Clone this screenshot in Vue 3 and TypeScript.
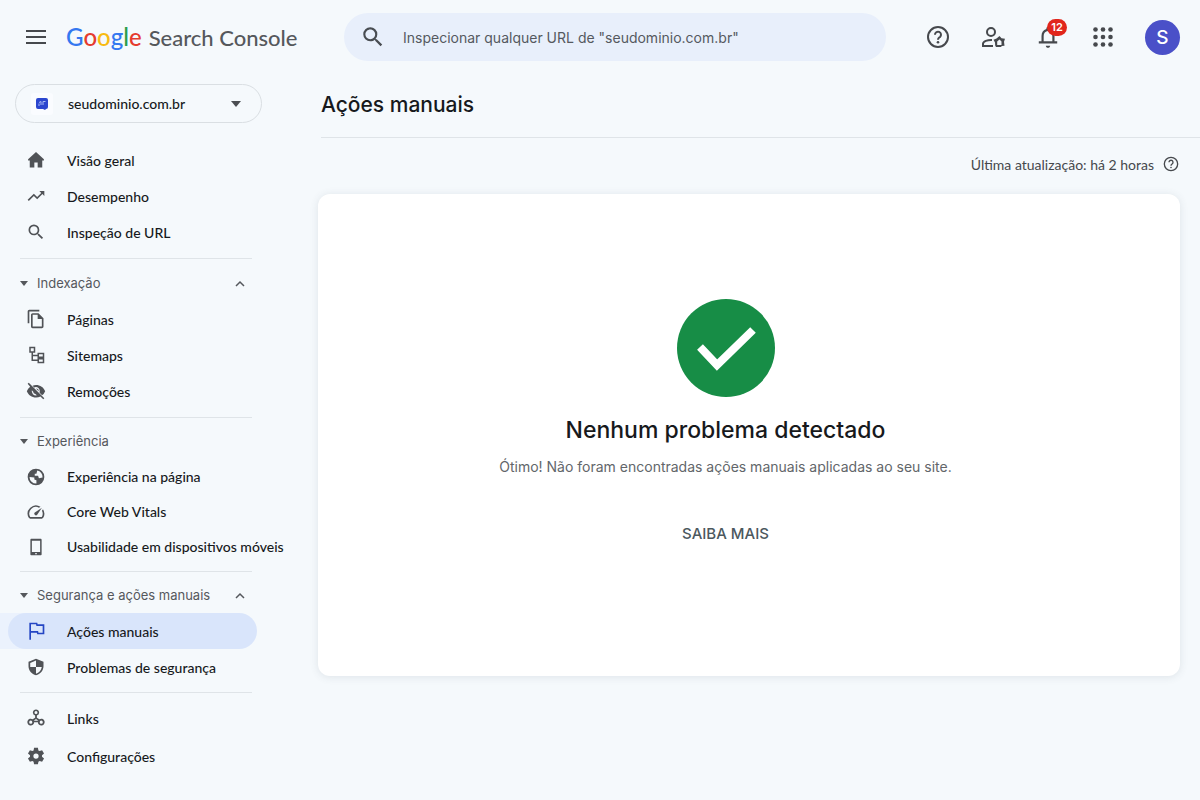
<script setup lang="ts">
import { ref } from 'vue'

interface NavItem {
  label: string
  icon: string
  size?: number
  active?: boolean
}

interface NavSection {
  id: string
  title?: string
  chevron?: boolean
  items: NavItem[]
}

const query = ref('')

const sections: NavSection[] = [
  {
    id: 'overview',
    items: [
      { label: 'Visão geral', icon: 'home' },
      { label: 'Desempenho', icon: 'trend' },
      { label: 'Inspeção de URL', icon: 'search' },
    ],
  },
  {
    id: 'indexing',
    title: 'Indexação',
    chevron: true,
    items: [
      { label: 'Páginas', icon: 'pages' },
      { label: 'Sitemaps', icon: 'sitemap', size: 18 },
      { label: 'Remoções', icon: 'hidden' },
    ],
  },
  {
    id: 'experience',
    title: 'Experiência',
    items: [
      { label: 'Experiência na página', icon: 'globe' },
      { label: 'Core Web Vitals', icon: 'gauge' },
      { label: 'Usabilidade em dispositivos móveis', icon: 'phone', size: 18 },
    ],
  },
  {
    id: 'security',
    title: 'Segurança e ações manuais',
    chevron: true,
    items: [
      { label: 'Ações manuais', icon: 'flag', active: true },
      { label: 'Problemas de segurança', icon: 'shield', size: 18 },
    ],
  },
  {
    id: 'tools',
    items: [
      { label: 'Links', icon: 'links', size: 18 },
      { label: 'Configurações', icon: 'gear', size: 18 },
    ],
  },
]

const icons: Record<string, string> = {
  home: 'M12 2.500 2.500 11v1.500h2V21H10v-6h4v6h5.500v-8.500h2V11z',
  trend: 'm16 6 2.290 2.290-4.880 4.880-4-4L2 16.590 3.410 18l6-6 4 4 6.300-6.290L22 12V6z',
  search:
    'M15.500 14h-.79l-.28-.27A6.471 6.471 0 0 0 16 9.500 6.500 6.500 0 1 0 9.500 16c1.610 0 3.090-.59 4.230-1.570l.27.28v.79l5 4.990L20.490 19zm-6 0C7.010 14 5 11.990 5 9.500S7.010 5 9.500 5 14 7.010 14 9.500 11.990 14 9.500 14z',
  pages:
    'M16 1H4c-1.100 0-2 .9-2 2v14h2V3h12zm-1 4H8c-1.100 0-1.990.9-1.990 2L6 21c0 1.100.89 2 1.990 2H19c1.100 0 2-.9 2-2V11zM8 21V7h6v5h5v9z',
  sitemap:
    'M3 1h8v8H8v2.500h6V9h9v7h-9v-2.500H8V18h6v-2h9v7h-9v-3H6V9H3zm2 2v4h4V3zm11 8v3h5v-3zm0 7v3h5v-3z',
  hidden:
    'M2 3.300 3.300 2 22 20.700 20.700 22l-3.400-3.400A12 12 0 0 1 12 19.700C7 19.700 2.700 16.700 1 12.200a11.800 11.800 0 0 1 4-5.300zM12 4.700c5 0 9.300 3 11 7.500a11.700 11.700 0 0 1-3.700 5l-3-3A5 5 0 0 0 9.800 7.700L7.900 5.800A12 12 0 0 1 12 4.700zM7 11.200a5 5 0 0 0 6 6l-1.700-1.700a3.200 3.200 0 0 1-2.800-2.800zm5-2.200a3.200 3.200 0 0 1 3.200 3.400z',
  globe:
    'M12 2a10 10 0 1 0 0 20 10 10 0 0 0 0-20zM4.200 12 10 12.500v2.500l2.500 1v3.900A8 8 0 0 1 4.200 12zm10.300-1.500h-4V8h2l1-3.800a8 8 0 0 1 6.400 8.300l-4.400 1z',
  gauge:
    'm20.380 8.570-1.230 1.850a8 8 0 0 1-.22 7.580H5.070A8 8 0 0 1 15.580 6.850l1.850-1.230A10 10 0 0 0 3.350 19a2 2 0 0 0 1.720 1h13.850a2 2 0 0 0 1.740-1 10 10 0 0 0-.27-10.440zm-9.790 6.840a2 2 0 0 0 2.830 0l5.660-8.490-8.490 5.660a2 2 0 0 0 0 2.830z',
  phone: 'M6 1h12c1 0 1.500.6 1.500 1.500v19c0 1-.5 1.500-1.500 1.500H6c-1 0-1.500-.5-1.500-1.500v-19C4.500 1.600 5 1 6 1zm.5 2.500v15h11v-15zM11 20v1.500h2V20z',
  flag: 'M4 2h9.500l.5 2h8v12h-8.500l-.5-2H6v8.500H4zm2 2v8h8.500l.5 2h5V6h-7.500L12 4z',
  shield:
    'M12 1 2 5v6c0 5.550 4.340 10.740 10 12 5.660-1.260 10-6.450 10-12V5zm0 10.990h7.700c-.53 4.120-3.680 7.790-7.700 8.940V12H4.300V6.500L12 3.390z',
  links:
    'M12 .5A4.200 4.200 0 0 1 13.200 8.700v2.800l3.300 2.200a4.500 4.500 0 1 1-2 3.800h-5a4.500 4.500 0 1 1-2-3.800l3.300-2.200V8.700A4.200 4.200 0 0 1 12 .5zm0 2.200a2 2 0 1 0 0 4 2 2 0 0 0 0-4zm0 10.600-3 2.200h6zM5 15.400a2.100 2.100 0 1 0 0 4.200 2.100 2.100 0 0 0 0-4.200zm14 0a2.100 2.100 0 1 0 0 4.200 2.100 2.100 0 0 0 0-4.200z',
  gear:
    'M8.800 4.500 9.400 1h5.200l.6 3.500 1.600.9 3.300-1.200 2.600 4.500-2.700 2.300v2l2.700 2.300-2.600 4.500-3.300-1.200-1.600.9-.6 3.500H9.400l-.6-3.500-1.600-.9-3.300 1.200-2.600-4.500L4 13v-2L1.300 8.700l2.600-4.500 3.300 1.200zM12 8.500a3.500 3.500 0 1 0 0 7 3.500 3.500 0 0 0 0-7z',
}
</script>

<template>
  <div class="app">
    <header class="topbar">
      <div class="brand">
        <button class="menu-btn" type="button" aria-label="Menu principal">
          <svg width="20" height="16" viewBox="0 0 20 16"><path d="M0 2h20M0 8h20M0 14h20" stroke="currentColor" stroke-width="2" /></svg>
        </button>
        <a class="logo" href="#">
          <span class="google"><span class="blue">G</span><span class="red">o</span><span class="yellow">o</span><span class="blue">g</span><span class="green">l</span><span class="red">e</span></span>
          <span class="product">Search Console</span>
        </a>
      </div>
      <form class="search" role="search" @submit.prevent>
        <svg width="26" height="26" viewBox="0 0 24 24" fill="currentColor"><path :d="icons.search" /></svg>
        <input v-model="query" type="text" aria-label="Inspecionar URL" placeholder="Inspecionar qualquer URL de &quot;seudominio.com.br&quot;">
      </form>
      <div class="actions">
        <button class="icon-btn" type="button" aria-label="Ajuda">
          <svg width="26" height="26" viewBox="0 0 26 26" fill="none" stroke="currentColor" stroke-width="2"><circle cx="13" cy="13" r="10" /><path d="M10 10.800a3 3 0 1 1 5 2.100c-1.200 1-2 1.400-2 2.800" /><circle cx="13" cy="18.300" r="1.300" fill="currentColor" stroke="none" /></svg>
        </button>
        <button class="icon-btn" type="button" aria-label="Gerenciar usuários">
          <svg width="24" height="24" viewBox="0 0 24 24" fill="none" stroke="currentColor" stroke-width="2"><circle cx="10" cy="7" r="4" /><path d="M12 21H2v-2.200c0-2.500 4.500-4 9-3.800" /><path fill="currentColor" stroke="none" fill-rule="evenodd" d="m18.500 11 2 2.200 3.500.6-1 3 .5 4-2.700.2-.8 1h-5l-.8-1.500-.2-3-1.500-2.700 3-1.300zm0 3.500-2.300 2V20h4.300v-3.500z" /></svg>
        </button>
        <button class="icon-btn" type="button" aria-label="Notificações, 12 novas">
          <svg width="26" height="26" viewBox="0 0 24 24" fill="currentColor"><path d="M12 22c1.100 0 2-.9 2-2h-4c0 1.100.9 2 2 2zm6-6v-5c0-3.070-1.630-5.640-4.500-6.320V4a1.500 1.500 0 0 0-3 0v.68C7.640 5.360 6 7.920 6 11v5H3.500v2h17v-2zm-2 0H8v-5c0-2.480 1.510-4.500 4-4.500s4 2.020 4 4.500z" /></svg>
          <span class="badge">12</span>
        </button>
        <button class="icon-btn" type="button" aria-label="Aplicativos">
          <svg width="20" height="20" viewBox="0 0 20 20" fill="currentColor"><template v-for="y in 3" :key="y"><circle v-for="x in 3" :key="x" :cx="x * 7.500 - 5" :cy="y * 7.500 - 5" r="2.300" /></template></svg>
        </button>
        <button class="avatar" type="button" aria-label="Conta">S</button>
      </div>
    </header>

    <div class="body">
      <aside class="sidebar">
        <button class="property" type="button">
          <span class="favicon">
            <svg width="12" height="12" viewBox="0 0 12 12"><path d="M2 0h8a2 2 0 0 1 2 2v7a2 2 0 0 1-2 2L9 12 7 11H2a2 2 0 0 1-2-2V2a2 2 0 0 1 2-2z" fill="#2b46cf" /><path d="M3 8V5.500m2 1.500V3.500M3 4.500 5 3.500M7 7V3.500h2.500" fill="none" stroke="#a9baf5" /></svg>
          </span>
          <span class="property-name">seudominio.com.br</span>
          <svg width="10" height="6" viewBox="0 0 10 6" fill="#4b4e52"><path d="M0 0h10L5 6z" /></svg>
        </button>
        <nav>
          <section v-for="section in sections" :key="section.id" :class="['group', section.id]">
            <button v-if="section.title" class="group-head" type="button" aria-expanded="true">
              <svg width="8" height="5" viewBox="0 0 8 5" fill="currentColor"><path d="M0 0h8L4 5z" /></svg>
              <span class="group-title">{{ section.title }}</span>
              <svg v-if="section.chevron" width="10" height="7" viewBox="0 0 10 7" fill="none" stroke="currentColor" stroke-width="1.500"><path d="m1 6 4-4 4 4" /></svg>
            </button>
            <ul>
              <li v-for="item in section.items" :key="item.label" :class="{ current: item.active }">
                <a :class="['item', { active: item.active }]" href="#" :aria-current="item.active ? 'page' : undefined">
                  <span class="item-icon">
                    <svg :width="item.size ?? 20" :height="item.size ?? 20" viewBox="0 0 24 24" fill="currentColor" fill-rule="evenodd"><path :d="icons[item.icon]" /></svg>
                  </span>
                  <span>{{ item.label }}</span>
                </a>
              </li>
            </ul>
          </section>
        </nav>
      </aside>

      <main class="content">
        <h1>Ações manuais</h1>
        <div class="updated">
          <span>Última atualização: há 2 horas</span>
          <button class="info-btn" type="button" aria-label="Sobre a atualização">
            <svg width="16" height="16" viewBox="0 0 24 24" fill="none" stroke="currentColor" stroke-width="2"><circle cx="12" cy="12" r="10" /><path d="M9 9.500a3 3 0 1 1 5 2.200c-1.200 1-2 1.400-2 3" /><circle cx="12" cy="17.200" r="1.200" fill="currentColor" stroke="none" /></svg>
          </button>
        </div>
        <section class="card">
          <svg width="98" height="98" viewBox="0 0 98 98"><circle cx="49" cy="49" r="49" fill="#178d46" /><path d="m23 48 17 18 36-35" fill="none" stroke="#fff" stroke-width="8" /></svg>
          <h2>Nenhum problema detectado</h2>
          <p>Ótimo! Não foram encontradas ações manuais aplicadas ao seu site.</p>
          <a class="more" href="#">SAIBA MAIS</a>
        </section>
      </main>
    </div>
  </div>
</template>

<style>
body {
  background: #f5f9fc;
}
</style>

<style scoped>
.app {
  min-height: 100vh;
  background: #f5f9fc;
  color: #17191c;
  font-family: Inter, "Liberation Sans", sans-serif;
  font-size: 13px;
}

.app * {
  box-sizing: border-box;
}

button,
input {
  font: inherit;
  color: inherit;
  border: 0;
  padding: 0;
  background: none;
}

button {
  cursor: pointer;
}

a {
  color: inherit;
  text-decoration: none;
}

svg {
  display: block;
  flex: none;
}

.menu-btn,
.info-btn,
.icon-btn {
  position: relative;
  display: flex;
  align-items: center;
  justify-content: center;
  color: #46494d;
}

.icon-btn {
  width: 26px;
  height: 26px;
}

.topbar {
  display: flex;
  align-items: center;
  height: 74px;
  padding-right: 20px;
}

.brand {
  display: flex;
  align-items: center;
  gap: 20px;
  flex: 0 0 344px;
  padding-left: 26px;
}

.logo {
  display: flex;
  align-items: baseline;
  gap: 7px;
  font-family: Lato, sans-serif;
  font-size: 22px;
  font-weight: 500;
  line-height: 32px;
  color: #55585c;
  white-space: nowrap;
}

.google {
  font-size: 24px;
}

.blue { color: #3478f0; }
.red { color: #e53c2e; }
.yellow { color: #f8bb12; }
.green { color: #2a9d4b; }

.search {
  display: flex;
  align-items: center;
  gap: 17px;
  flex: 0 1 542px;
  height: 48px;
  padding: 0 16px;
  border-radius: 24px;
  background: #e8effb;
  color: #494d52;
}

.search input {
  flex: 1;
  min-width: 0;
  font-size: 14px;
  outline: 0;
}

.search input::placeholder {
  color: #55595f;
  opacity: 1;
}

.actions {
  display: flex;
  align-items: center;
  gap: 29px;
  margin-left: auto;
}

.badge {
  position: absolute;
  top: -5px;
  right: -6px;
  width: 20px;
  height: 17px;
  border-radius: 9px;
  background: #e1261c;
  color: #fff;
  font-size: 11px;
  font-weight: 600;
  line-height: 17px;
}

.avatar {
  width: 35px;
  height: 35px;
  border-radius: 50%;
  background: #4a50c8;
  color: #fff;
  font-size: 19px;
  font-weight: 500;
}

.body {
  display: flex;
}

.sidebar {
  flex: 0 0 318px;
  padding-top: 10px;
}

.property {
  display: flex;
  align-items: center;
  width: 247px;
  height: 39px;
  margin-left: 15px;
  padding: 0 20px 0 15px;
  border: 1px solid #dadfe3;
  border-radius: 20px;
  font-family: Lato, sans-serif;
  font-size: 14px;
  font-weight: 500;
}

.favicon {
  display: flex;
  align-items: center;
  justify-content: center;
  width: 22px;
  height: 22px;
  border-radius: 3px;
  background: #fafcff;
}

.property-name {
  flex: 1;
  margin-left: 15px;
  text-align: left;
}

nav {
  padding-top: 19px;
}

.group + .group::before {
  content: "";
  display: block;
  width: 232px;
  height: 1px;
  margin: 8px 0 6px 20px;
  background: #dfe4e8;
}

.group.experience::before,
.group.security::before {
  margin-bottom: 5px;
}

.group.security::before,
.group.tools::before {
  margin-top: 7px;
}

.group-head {
  display: flex;
  align-items: center;
  width: 245px;
  height: 36px;
  padding-left: 20px;
  color: #55585c;
}

.group-title {
  flex: 1;
  margin-left: 9px;
  text-align: left;
}

ul {
  list-style: none;
  margin: 0;
  padding: 0;
}

.current {
  background: linear-gradient(to right, #ebf2fd 28px, transparent 28px);
}

.item {
  display: flex;
  align-items: center;
  gap: 21px;
  width: 249px;
  height: 36px;
  margin-left: 8px;
  padding-left: 18px;
  border-radius: 18px;
  font-family: Lato, sans-serif;
  font-size: 14px;
  font-weight: 500;
  white-space: nowrap;
}

.item-icon {
  display: flex;
  flex: none;
  justify-content: center;
  width: 20px;
  color: #505357;
}

.experience .item {
  height: 35px;
}

.tools .item {
  height: 38px;
}

.item.active {
  background: #d9e5fb;
}

.item.active .item-icon {
  color: #2546c4;
}

.content {
  flex: 1;
  min-width: 0;
}

h1 {
  margin: 0 0 0 3px;
  height: 64px;
  border-bottom: 1px solid #dfe4e8;
  font-size: 21px;
  font-weight: 500;
  line-height: 62px;
}

.updated {
  display: flex;
  align-items: center;
  justify-content: flex-end;
  gap: 9px;
  height: 56px;
  padding: 0 21px 4px 0;
  color: #45484c;
  font-family: Lato, sans-serif;
  font-size: 14px;
}

.card {
  display: flex;
  flex-direction: column;
  align-items: center;
  margin-right: 20px;
  padding: 105px 47px 127px 0;
  border-radius: 12px;
  background: #fff;
  box-shadow: 0 1px 8px rgba(60, 70, 90, 0.12);
}

h2 {
  margin: 17px 0 0;
  font-size: 23px;
  font-weight: 500;
  line-height: 32px;
}

.card p {
  margin: 9px 0 0;
  color: #62666a;
  font-size: 14px;
  line-height: 24px;
}

.more {
  margin-top: 40px;
  color: #4c585e;
  font-size: 15px;
  font-weight: 500;
  line-height: 30px;
}
</style>
